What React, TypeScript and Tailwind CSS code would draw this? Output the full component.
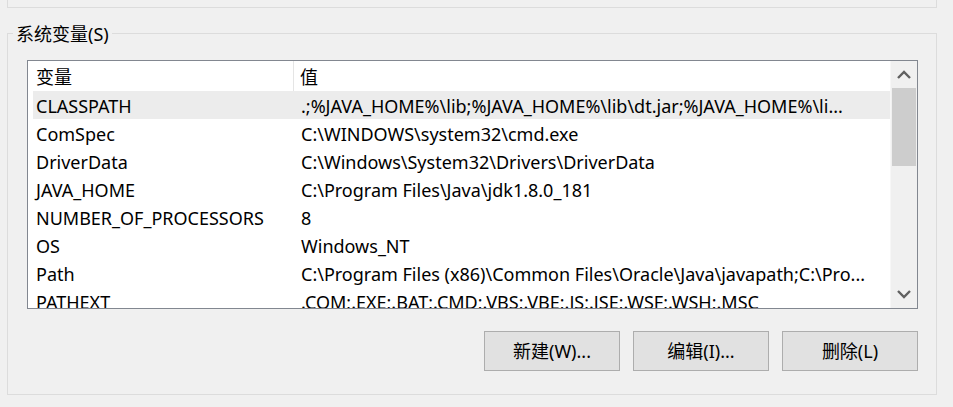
import React from 'react';

const font = { fontFamily: '"Noto Sans", "Noto Sans CJK SC", sans-serif' };

const rows: [string, string][] = [
  ['CLASSPATH', '.;%JAVA_HOME%\\lib;%JAVA_HOME%\\lib\\dt.jar;%JAVA_HOME%\\li...'],
  ['ComSpec', 'C:\\WINDOWS\\system32\\cmd.exe'],
  ['DriverData', 'C:\\Windows\\System32\\Drivers\\DriverData'],
  ['JAVA_HOME', 'C:\\Program Files\\Java\\jdk1.8.0_181'],
  ['NUMBER_OF_PROCESSORS', '8'],
  ['OS', 'Windows_NT'],
  ['Path', 'C:\\Program Files (x86)\\Common Files\\Oracle\\Java\\javapath;C:\\Pro...'],
  ['PATHEXT', '.COM;.EXE;.BAT;.CMD;.VBS;.VBE;.JS;.JSE;.WSF;.WSH;.MSC'],
];

function Chevron({ up }: { up?: boolean }) {
  return (
    <svg width="14" height="9" viewBox="0 0 14 9" className="block">
      <path
        d={up ? 'M1 8 L7 2 L13 8' : 'M1 1 L7 7 L13 1'}
        fill="none"
        stroke="#606060"
        strokeWidth="2.4"
      />
    </svg>
  );
}

export default function App() {
  return (
    <div className="w-[953px] h-[407px] bg-[#f0f0f0] overflow-hidden text-[18px] leading-[24px] text-black" style={font}>
      {/* bottom edge of the group box above */}
      <div className="ml-[7px] w-[930px] h-[8px] border-x border-b border-[#dcdcdc]" />

      {/* 系统变量 group */}
      <div className="relative ml-[7px] mt-[25px] w-[930px] h-[362px] border border-[#dcdcdc]">
        <span className="absolute left-[5px] -top-[12px] px-[3px] bg-[#f0f0f0]">
          系统变量(S)
        </span>

        <div className="ml-[19px] mt-[26px] w-[891px] h-[249px] border border-[#828790] bg-white flex">
          <div className="flex-1 flex flex-col overflow-hidden">
            {/* header */}
            <div className="h-[30px] flex shrink-0">
              <div className="w-[266px] h-full pl-[8px] pt-[2px] flex items-center border-r border-[#e5e5e5]">变量</div>
              <div className="flex-1 pl-[6px] pt-[2px] flex items-center">值</div>
            </div>
            {/* rows */}
            <div className="flex-1 overflow-hidden pl-[5px]">
              {rows.map(([name, value], i) => (
                <div
                  key={name}
                  className={`h-[28px] pt-[2px] flex items-center whitespace-nowrap ${i === 0 ? 'bg-[#ececec]' : ''}`}
                >
                  <div className="w-[261px] pl-[3px] shrink-0">{name}</div>
                  <div className="flex-1 pl-[7px] overflow-hidden">{value}</div>
                </div>
              ))}
            </div>
          </div>

          {/* scrollbar */}
          <div className="w-[27px] h-full bg-[#f0f0f0] border-l border-[#f7f7f7] flex flex-col">
            <div className="h-[27px] flex items-center justify-center">
              <Chevron up />
            </div>
            <div className="flex-1 pl-[1px] pr-[1px]">
              <div className="h-[78px] bg-[#cdcdcd]" />
            </div>
            <div className="h-[27px] flex items-center justify-center">
              <Chevron />
            </div>
          </div>
        </div>

        <div className="mt-[22px] w-[910px] flex justify-end gap-[13px]">
          {['新建(W)...', '编辑(I)...', '删除(L)'].map((t) => (
            <button
              key={t}
              className="w-[136px] h-[40px] bg-[#e1e1e1] border border-[#adadad] flex items-center justify-center"
            >
              {t}
            </button>
          ))}
        </div>
      </div>
    </div>
  );
}
